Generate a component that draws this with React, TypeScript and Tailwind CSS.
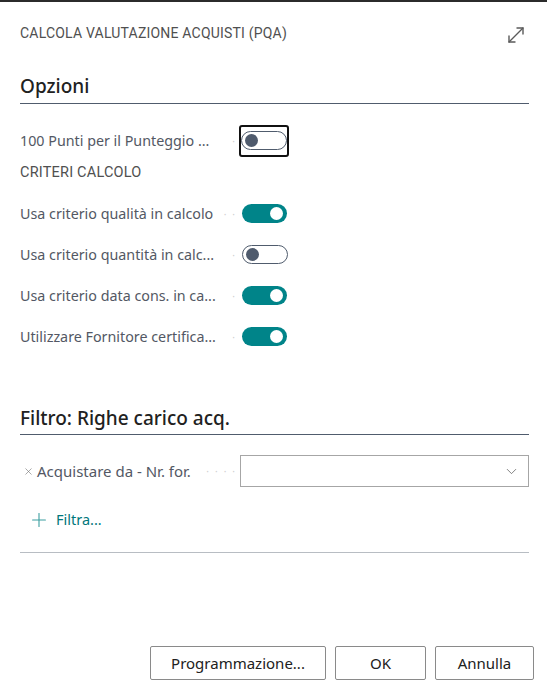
import { MoveDiagonal, ChevronDown, Plus, X } from "lucide-react";

const font = "font-['Segoe_UI','Noto_Sans','Open_Sans',sans-serif]";
const capsFont = "font-['Roboto','Liberation_Sans',sans-serif]";

function Toggle({ on, focused }: { on: boolean; focused?: boolean }) {
  const pill = on ? (
    <div className="flex h-[19px] w-[45px] items-center justify-end rounded-full bg-[#008489] pr-[4px]">
      <div className="h-[13px] w-[13px] rounded-full bg-white" />
    </div>
  ) : (
    <div className="flex h-[19px] w-[46px] items-center rounded-full border border-[#505c6d] bg-white pl-[3px]">
      <div className="h-[13px] w-[13px] rounded-full bg-[#4f5b6d]" />
    </div>
  );
  if (!focused) return <div className="ml-[2px]">{pill}</div>;
  return (
    <div className="-ml-[1px] flex h-[32px] w-[50px] items-center justify-center rounded-[3px] border-2 border-[#111]">
      {pill}
    </div>
  );
}

function Leader({ dots }: { dots: number }) {
  return (
    <div className="flex flex-1 justify-end gap-[6px] pr-[5px] text-[10px] leading-none text-[#cfcfcf]">
      {Array.from({ length: dots }).map((_, i) => (
        <span key={i}>·</span>
      ))}
    </div>
  );
}

function ToggleRow({ label, on, focused, dots = 1 }: { label: string; on: boolean; focused?: boolean; dots?: number }) {
  return (
    <div className="flex h-[41px] items-center">
      <div className="flex w-[220px] items-center">
        <span className="truncate text-[14.3px] text-[#535864]">{label}</span>
        <Leader dots={dots} />
      </div>
      <Toggle on={on} focused={focused} />
    </div>
  );
}

export default function App() {
  return (
    <div className={`flex h-[692px] w-[547px] flex-col border-t-2 border-[#2b2b2b] bg-white ${font}`}>
      <div className="flex h-[42px] items-start justify-between pl-5 pr-[19px] pt-[20px]">
        <span className={`text-[14px] leading-[22px] tracking-[0.2px] text-[#505050] ${capsFont}`}>
          CALCOLA VALUTAZIONE ACQUISTI (PQA)
        </span>
        <MoveDiagonal className="mt-[1px] h-[24px] w-[24px] shrink-0 text-[#5a5a5a]" strokeWidth={1.4} />
      </div>

      <div className="ml-5 mr-[18px] mt-[30px] border-b border-[#505c6d] pb-[5px]">
        <h2 className="text-[19px] font-medium leading-[24px] text-[#212121]">Opzioni</h2>
      </div>

      <div className="ml-5 mr-[18px] mt-[16px]">
        <ToggleRow label="100 Punti per il Punteggio ..." on={false} focused />
        <div className={`flex h-[24px] items-center text-[14.5px] tracking-[0.2px] text-[#505050] ${capsFont}`}>
          CRITERI CALCOLO
        </div>
        <div className="mt-[8px]">
          <ToggleRow label="Usa criterio qualità in calcolo" on dots={2} />
          <ToggleRow label="Usa criterio quantità in calc..." on={false} />
          <ToggleRow label="Usa criterio data cons. in ca..." on />
          <ToggleRow label="Utilizzare Fornitore certifica..." on />
        </div>
      </div>

      <div className="ml-5 mr-[18px] mt-[49px] border-b border-[#505c6d] pb-[4px]">
        <h2 className="text-[19px] font-medium leading-[24px] text-[#212121]">Filtro: Righe carico acq.</h2>
      </div>

      <div className="ml-5 mr-[18px] mt-[20px] flex h-[32px] items-center">
        <div className="flex w-[220px] items-center">
          <X className="ml-[3px] mr-[3px] h-[11px] w-[11px] text-[#707070]" strokeWidth={1.3} />
          <span className="text-[15px] text-[#535864]">Acquistare da - Nr. for.</span>
          <Leader dots={4} />
        </div>
        <div className="flex h-[32px] flex-1 items-center justify-end border border-[#a6a6a6] pr-[8px]">
          <ChevronDown className="h-[17px] w-[17px] text-[#606060]" strokeWidth={1.1} />
        </div>
      </div>

      <div className="ml-5 mr-[18px] mt-[17px] flex h-[32px] items-center pl-[8px]">
        <Plus className="h-[22px] w-[22px] text-[#3b9ea0]" strokeWidth={1.2} />
        <span className="ml-[6px] text-[14.5px] text-[#00777b]">Filtra...</span>
      </div>

      <div className="ml-5 mr-[18px] mt-[16px] border-t border-[#b8bdc3]" />

      <div className="flex-1" />

      <div className="flex justify-end gap-[9px] pb-[12px] pr-[13px]">
        <button className="h-[34px] w-[176px] rounded-[2px] border border-[#8a8a8a] text-[15px] text-[#212121]">
          Programmazione...
        </button>
        <button className="h-[34px] w-[91px] rounded-[2px] border border-[#8a8a8a] text-[15px] text-[#212121]">OK</button>
        <button className="h-[34px] w-[99px] rounded-[2px] border border-[#8a8a8a] text-[15px] text-[#212121]">
          Annulla
        </button>
      </div>
    </div>
  );
}
